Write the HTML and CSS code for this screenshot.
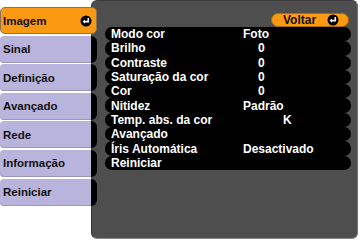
FILE: index.html
```html
<!DOCTYPE html>
<html lang="pt">
<head>
    <meta charset="UTF-8">
    <meta name="viewport" content="width=device-width, initial-scale=1.0">
    <title>Imagem</title>
    <link rel="stylesheet" href="styles.css">
</head>
<body>
    <div class="screen">
        <nav class="tabs">
            <div class="tab active">
                <span class="tab-label">Imagem</span>
                <svg class="enter" viewBox="0 0 12 12"><circle cx="6" cy="6" r="5.5" fill="#000"/><path d="M8.3 3v3.6H4.2" fill="none" stroke="#fff" stroke-width="1.6"/><path d="M2.6 6.6l2.4-2.2v4.4z" fill="#fff"/></svg>
            </div>
            <div class="tab"><span class="tab-label">Sinal</span><span class="nub"></span></div>
            <div class="tab"><span class="tab-label">Definição</span><span class="nub"></span></div>
            <div class="tab"><span class="tab-label">Avançado</span><span class="nub"></span></div>
            <div class="tab"><span class="tab-label">Rede</span><span class="nub"></span></div>
            <div class="tab"><span class="tab-label">Informação</span><span class="nub"></span></div>
            <div class="tab"><span class="tab-label">Reiniciar</span><span class="nub"></span></div>
        </nav>

        <section class="panel">
            <div class="panel-head">
                <div class="back">
                    <span>Voltar</span>
                    <svg class="enter" viewBox="0 0 12 12"><circle cx="6" cy="6" r="5.5" fill="#000"/><path d="M8.3 3v3.6H4.2" fill="none" stroke="#fff" stroke-width="1.6"/><path d="M2.6 6.6l2.4-2.2v4.4z" fill="#fff"/></svg>
                </div>
            </div>
            <ul class="rows">
                <li class="row"><span class="label">Modo cor</span><span class="value">Foto</span></li>
                <li class="row"><span class="label">Brilho</span><span class="value num">0</span></li>
                <li class="row"><span class="label">Contraste</span><span class="value num">0</span></li>
                <li class="row"><span class="label">Saturação da cor</span><span class="value num">0</span></li>
                <li class="row"><span class="label">Cor</span><span class="value num">0</span></li>
                <li class="row"><span class="label">Nitidez</span><span class="value">Padrão</span></li>
                <li class="row"><span class="label">Temp. abs. da cor</span><span class="value unit">K</span></li>
                <li class="row"><span class="label">Avançado</span></li>
                <li class="row"><span class="label">Íris Automática</span><span class="value">Desactivado</span></li>
                <li class="row"><span class="label">Reiniciar</span></li>
            </ul>
        </section>
    </div>
</body>
</html>
```

FILE: styles.css
```css
body {
    margin: 0;
    background-color: #fff;
    font-family: "Liberation Sans", Arial, sans-serif;
}
.screen {
    display: flex;
    width: 360px;
    height: 242px;
}
.tabs {
    position: relative;
    z-index: 1;
    flex: none;
    width: 97px;
    margin-right: -6px;
    padding-top: 7px;
    display: flex;
    flex-direction: column;
    gap: 1.6px;
}
.tab {
    height: 27px;
    display: flex;
}
.tab-label {
    flex: 1;
    display: flex;
    align-items: center;
    padding-left: 3px;
    background-color: #b8b4db;
    border-radius: 4px 0 0 4px;
    box-shadow: inset 0 -1px 0 #9a96c0;
    font-size: 11.5px;
    font-weight: bold;
    color: #111;
}
.nub {
    width: 6px;
    background-color: #000;
    border-radius: 0 6px 6px 0;
}
.tab.active {
    box-sizing: border-box;
    align-items: center;
    padding-right: 4px;
    background-color: #fb9a12;
    border: 1px solid #8c7250;
    border-radius: 5px;
}
.tab.active .tab-label {
    background: none;
    box-shadow: none;
    padding-left: 2px;
}
.enter {
    width: 12px;
    height: 12px;
    flex: none;
}
.panel {
    flex: 1;
    box-sizing: border-box;
    height: 239px;
    margin-right: 2px;
    padding: 12px 6px 0 13px;
    background-color: #4e4e4e;
    border: 1px solid #3a3a3a;
    border-right-color: #777;
    border-bottom-color: #888;
    border-radius: 6px;
}
.panel-head {
    display: flex;
    justify-content: flex-end;
    padding-right: 2px;
}
.back {
    box-sizing: border-box;
    width: 78px;
    height: 14px;
    display: flex;
    align-items: center;
    gap: 10px;
    padding-left: 11px;
    background-color: #fb9a12;
    border: 1px solid #a86c14;
    border-radius: 7px;
    font-size: 12px;
    font-weight: bold;
    color: #111;
}
.back span {
    width: 34px;
}
.rows {
    list-style: none;
    margin: 0;
    padding: 0;
}
.row {
    height: 14.3px;
    display: flex;
    align-items: center;
    padding-left: 6px;
    background-color: #000;
    border-radius: 7px;
    color: #fff;
    font-size: 12px;
    font-weight: bold;
    line-height: 14px;
}
.label {
    width: 132px;
    flex: none;
}
.value.num {
    padding-left: 15px;
}
.value.unit {
    padding-left: 40px;
}
```
